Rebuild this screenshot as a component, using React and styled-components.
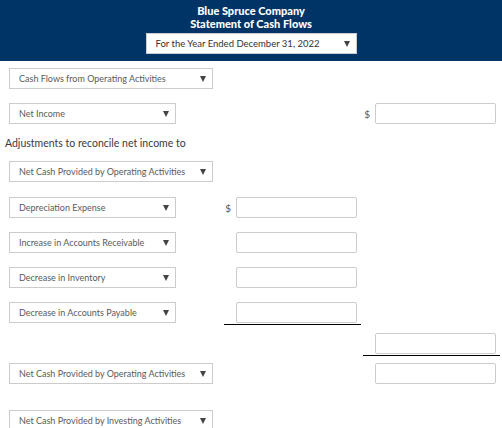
import React from 'react';
import styled, { createGlobalStyle } from 'styled-components';

const GlobalStyle = createGlobalStyle`
    body {
        margin: 0;
        background: #FFFFFF;
        font-family: 'Lato', 'Open Sans', sans-serif;
    }
`
const Header = styled.header`
    background-color: #003366;
    color: #FFFFFF;
    display: flex;
    flex-direction: column;
    align-items: center;
    padding: 4px 0 7px 0;
`
const Title = styled.div`
    font-weight: 900;
    font-size: 11px;
    line-height: 13px;
    text-align: center;
`
const Form = styled.section`
    padding: 7px 0 0 0;
`
const Row = styled.div`
    display: grid;
    grid-template-columns: 213px 137px 137px;
    column-gap: 2px;
    align-items: start;
    padding-left: 9px;
    margin-top: ${({ top }) => top || 0}px;
`
const Caption = styled.div`
    font-size: 10.5px;
    line-height: 14px;
    color: #3A3A3A;
    padding-left: 5px;
    margin: 12px 0 11px 0;
`
const Dropdown = styled.div`
    box-sizing: border-box;
    width: ${({ width }) => width}px;
    height: 21px;
    margin-top: ${({ top }) => top || 0}px;
    border: 1px solid #CCCCCC;
    background: #FFFFFF;
    display: flex;
    align-items: center;
    justify-content: space-between;
    padding: 0 6px 0 9px;
    font-size: ${({ size }) => size || 9}px;
    color: ${({ dark }) => dark ? '#333333' : '#5A5A5A'};
    white-space: nowrap;
`
const Caret = styled.span`
    width: 0;
    height: 0;
    border-left: 3px solid transparent;
    border-right: 3px solid transparent;
    border-top: 6px solid #444444;
    flex-shrink: 0;
`
const MoneyCell = styled.div`
    grid-column: ${({ col }) => col};
    display: flex;
    justify-content: flex-end;
    align-items: center;
    padding-right: 4px;
    padding-bottom: ${({ ruled }) => ruled ? 1 : 0}px;
    border-bottom: ${({ ruled }) => ruled ? '1px solid #000000' : 'none'};
`
const Dollar = styled.span`
    font-size: 10px;
    color: #555555;
    margin-right: 5px;
`
const Amount = styled.input`
    box-sizing: border-box;
    width: 121px;
    height: 21px;
    border: 1px solid #CCCCCC;
    border-radius: 2px;
    background: #FFFFFF;
    outline: none;
    padding: 0 4px;
    font-family: inherit;
`

function Select({ label, width = 204, top, size, dark }) {
    return (
        <Dropdown width={width} top={top} size={size} dark={dark}>
            <span>{label}</span>
            <Caret />
        </Dropdown>
    )
}

function Money({ col, dollar, ruled }) {
    return (
        <MoneyCell col={col} ruled={ruled}>
            {dollar && <Dollar>$</Dollar>}
            <Amount type="text" />
        </MoneyCell>
    )
}

const adjustments = [
    { label: 'Depreciation Expense', width: 167, dollar: true },
    { label: 'Increase in Accounts Receivable', width: 167 },
    { label: 'Decrease in Inventory', width: 167 },
    { label: 'Decrease in Accounts Payable', width: 167, ruled: true },
]

function App() {
    return (
        <>
            <GlobalStyle />
            <Header>
                <Title>Blue Spruce Company</Title>
                <Title>Statement of Cash Flows</Title>
                <Select label="For the Year Ended December 31, 2022" width={211} top={3} size={9.5} dark />
            </Header>
            <Form>
                <Row>
                    <Select label="Cash Flows from Operating Activities" />
                </Row>
                <Row top={14}>
                    <Select label="Net Income" width={167} />
                    <Money col={3} dollar />
                </Row>
                <Caption>Adjustments to reconcile net income to</Caption>
                <Row>
                    <Select label="Net Cash Provided by Operating Activities" />
                </Row>
                {adjustments.map((item, i) => (
                    <Row key={item.label} top={i === 0 ? 15 : 14}>
                        <Select label={item.label} width={item.width} />
                        <Money col={2} dollar={item.dollar} ruled={item.ruled} />
                    </Row>
                ))}
                <Row top={8}>
                    <Money col={3} ruled />
                </Row>
                <Row top={7}>
                    <Select label="Net Cash Provided by Operating Activities" />
                    <Money col={3} />
                </Row>
                <Row top={26}>
                    <Select label="Net Cash Provided by Investing Activities" />
                </Row>
            </Form>
        </>
    )
}

export default App;
